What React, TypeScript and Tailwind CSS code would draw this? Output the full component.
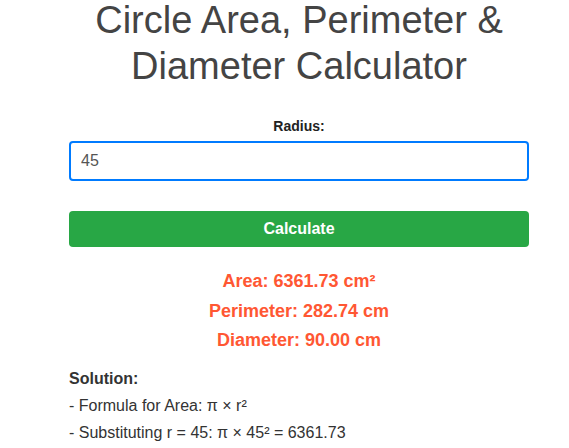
export default function App() {
  return (
    <div className="min-h-screen bg-white font-['Liberation_Sans',Arial,sans-serif]">
      <div className="ml-[49px] w-[500px] px-5">
        <h1 className="mt-[-3px] text-center text-[38px] font-normal leading-[46px] text-[#444]">
          Circle Area, Perimeter &amp; Diameter Calculator
        </h1>

        <label className="mt-[27px] block text-center text-[14px] font-bold leading-5 text-[#222]">
          Radius:
        </label>
        <input
          type="number"
          defaultValue="45"
          className="mt-[5px] block h-10 w-full rounded-[4px] border-2 border-[#007bff] px-[10px] text-[16px] text-[#555] outline-none"
        />

        <button className="mt-[30px] block h-9 w-full rounded-[4px] bg-[#28a745] text-[16px] font-bold text-white">
          Calculate
        </button>

        <div className="mt-5 text-center text-[18px] font-bold leading-[29.5px] text-[#ff5733]">
          <p>Area: 6361.73 cm²</p>
          <p>Perimeter: 282.74 cm</p>
          <p>Diameter: 90.00 cm</p>
        </div>

        <div className="mt-[9px] text-[16px] leading-[27px] text-[#333]">
          <p className="font-bold">Solution:</p>
          <p>- Formula for Area: π × r²</p>
          <p>- Substituting r = 45: π × 45² = 6361.73</p>
        </div>
      </div>
    </div>
  );
}
